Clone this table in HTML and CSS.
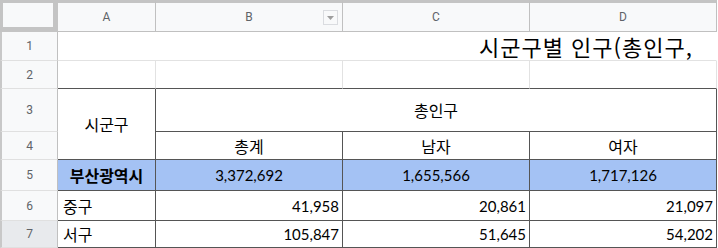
FILE: index.html
```html
<!DOCTYPE html>
<html lang="ko">
<head>
<meta charset="utf-8">
<title>시군구별 인구</title>
<link rel="stylesheet" href="styles.css">
</head>
<body>
<div class="sheet">
  <div class="corner"><div class="corner-box"></div></div>
  <div class="ch">A</div>
  <div class="ch">B<span class="filter"><svg width="7" height="4" viewBox="0 0 7 4"><path d="M0 0H7L3.5 4Z" fill="#9e9e9e"/></svg></span></div>
  <div class="ch">C</div>
  <div class="ch">D</div>

  <div class="rh">1</div>
  <div class="c title span4">시군구별 인구(총인구,</div>

  <div class="rh">2</div>
  <div class="c top"></div>
  <div class="c top"></div>
  <div class="c top"></div>
  <div class="c top"></div>

  <div class="rh">3</div>
  <div class="c t ko center rowspan2">시군구</div>
  <div class="c t ko center span3">총인구</div>

  <div class="rh">4</div>
  <div class="c t ko center">총계</div>
  <div class="c t ko center">남자</div>
  <div class="c t ko center">여자</div>

  <div class="rh">5</div>
  <div class="c t ko center blue bold">부산광역시</div>
  <div class="c t num center blue">3,372,692</div>
  <div class="c t num center blue">1,655,566</div>
  <div class="c t num center blue">1,717,126</div>

  <div class="rh">6</div>
  <div class="c t ko">중구</div>
  <div class="c t num">41,958</div>
  <div class="c t num">20,861</div>
  <div class="c t num">21,097</div>

  <div class="rh rh-active">7</div>
  <div class="c t ko">서구</div>
  <div class="c t num">105,847</div>
  <div class="c t num">51,645</div>
  <div class="c t num">54,202</div>
</div>
</body>
</html>
```

FILE: styles.css
```css
html, body {
  margin: 0;
  padding: 0;
  background: #ffffff;
  overflow: hidden;
}

.sheet {
  display: grid;
  grid-template-columns: 58px 98px 187px 187px 187px;
  grid-template-rows: 32px 29px 28px 43px 28px 31px 30px 27px;
  width: 717px;
}

.corner {
  box-sizing: border-box;
  background: #c4c4c4;
  padding: 3px 5px 5px 3px;
}

.corner-box {
  width: 100%;
  height: 100%;
  background: #f8f9fa;
}

.ch {
  position: relative;
  box-sizing: border-box;
  background: #f8f9fa;
  border-top: 3px solid #c4c4c4;
  border-right: 1px solid #c0c0c0;
  border-bottom: 1px solid #c0c0c0;
  display: flex;
  align-items: center;
  justify-content: center;
  font-family: Roboto, "Liberation Sans", sans-serif;
  font-size: 12px;
  color: #5f6368;
}

.filter {
  position: absolute;
  right: 4px;
  top: 7px;
  width: 15px;
  height: 15px;
  box-sizing: border-box;
  border: 1px solid #dadce0;
  background: #f8f9fa;
  display: flex;
  align-items: center;
  justify-content: center;
}

.rh {
  box-sizing: border-box;
  background: #f8f9fa;
  border-left: 2px solid #c8c8c8;
  border-right: 1px solid #c0c0c0;
  border-bottom: 1px solid #e0e0e0;
  display: flex;
  align-items: center;
  justify-content: center;
  font-family: Roboto, "Liberation Sans", sans-serif;
  font-size: 12px;
  color: #5f6368;
}

.rh-active {
  background: #e8eaed;
}

.c {
  box-sizing: border-box;
  border-right: 1px solid #e2e2e2;
  border-bottom: 1px solid #e2e2e2;
  display: flex;
  align-items: center;
  color: #000000;
  white-space: nowrap;
  overflow: hidden;
}

.top {
  border-bottom-color: #555555;
}

.t {
  border-right-color: #555555;
  border-bottom-color: #555555;
}

.span4 {
  grid-column: span 4;
}

.span3 {
  grid-column: span 3;
}

.rowspan2 {
  grid-row: span 2;
}

.title {
  overflow: visible;
  border-right-color: transparent;
  padding-left: 421px;
  font-family: "Noto Sans CJK KR", sans-serif;
  font-size: 22px;
  letter-spacing: 1px;
}

.ko {
  font-family: "Noto Sans CJK KR", sans-serif;
  font-size: 16px;
  padding-left: 5px;
}

.num {
  font-family: Lato, "Liberation Sans", sans-serif;
  font-size: 15px;
  justify-content: flex-end;
  padding-right: 3px;
}

.center {
  justify-content: center;
  padding-left: 0;
  padding-right: 0;
}

.blue {
  background: #a4c2f4;
}

.bold {
  font-weight: 700;
}
```
